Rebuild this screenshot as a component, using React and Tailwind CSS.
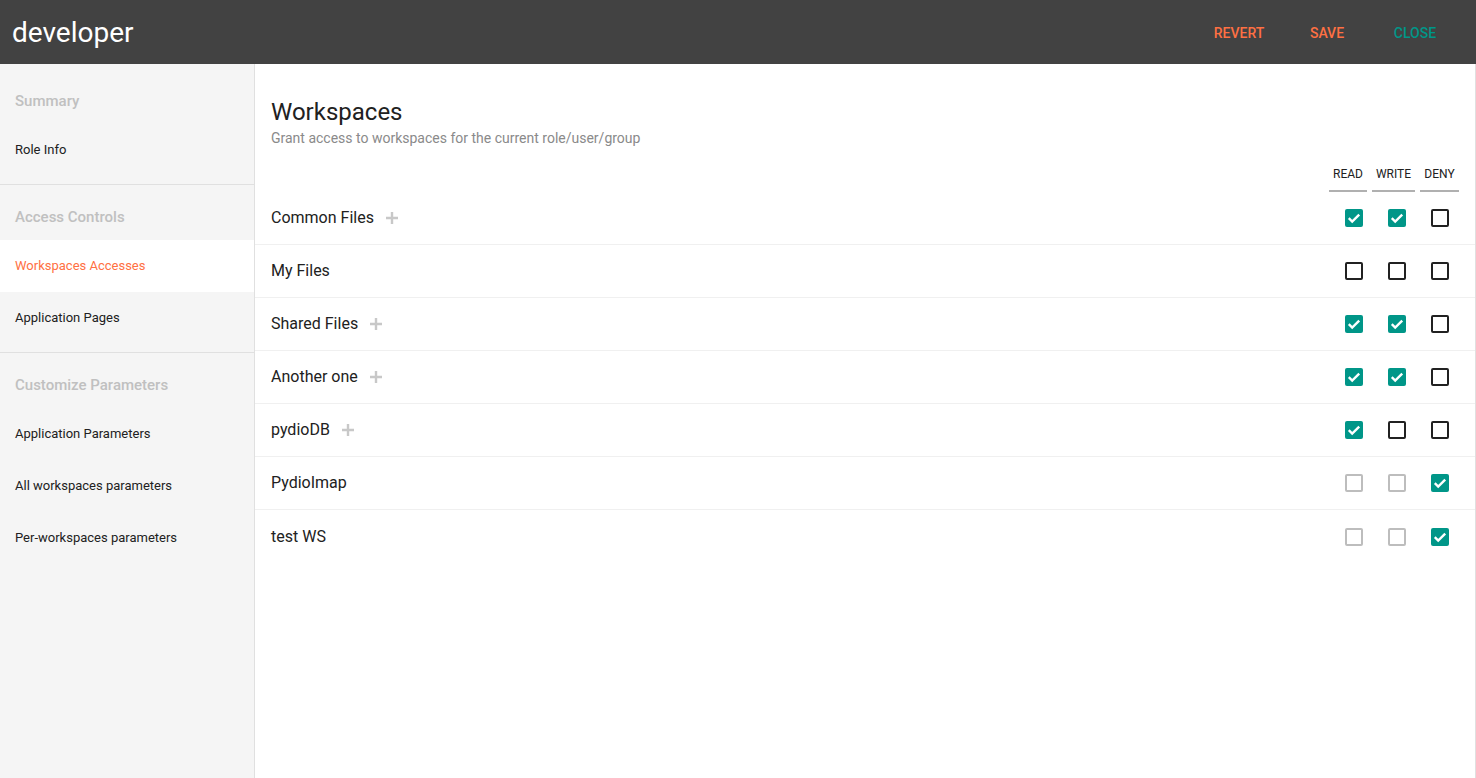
import React from "react";

const workspaces = [
  { name: "Common Files", plus: true, read: true, write: true, deny: false },
  { name: "My Files", plus: false, read: false, write: false, deny: false },
  { name: "Shared Files", plus: true, read: true, write: true, deny: false },
  { name: "Another one", plus: true, read: true, write: true, deny: false },
  { name: "pydioDB", plus: true, read: true, write: false, deny: false },
  { name: "PydioImap", plus: false, read: false, write: false, deny: true, locked: true },
  { name: "test WS", plus: false, read: false, write: false, deny: true, locked: true },
];

function Checkbox({ checked, disabled }) {
  if (checked) {
    return (
      <div className="w-[18px] h-[18px] rounded-[2px] bg-[#009688] flex items-center justify-center">
        <svg width="18" height="18" viewBox="0 0 18 18">
          <path d="M3.8 9.2l3.4 3.4 7-7" fill="none" stroke="#fff" strokeWidth="2.4" />
        </svg>
      </div>
    );
  }
  return (
    <div
      className={
        "w-[18px] h-[18px] rounded-[2px] border-2 " +
        (disabled ? "border-[#bdbdbd]" : "border-[#212121]")
      }
    />
  );
}

function PlusIcon() {
  return (
    <svg width="12" height="12" viewBox="0 0 12 12" className="ml-3">
      <path d="M4.8 0h2.4v4.8H12v2.4H7.2V12H4.8V7.2H0V4.8h4.8z" fill="#c8c8c8" />
    </svg>
  );
}

function SideSection({ title, items, first }) {
  return (
    <div className={"border-b border-[#e0e0e0] " + (first ? "pt-[13px] pb-[8px]" : "pt-[8px] pb-[8px]")}>
      <div className="h-[47px] flex items-center pt-[2px] px-[15px] text-[15px] font-medium text-[#c0c0c0]">{title}</div>
      {items.map((it) => (
        <div
          key={it.label}
          className={
            "h-[52px] flex items-center px-[15px] text-[13px] " +
            (it.active ? "bg-white text-[#ff7043]" : "text-[#212121]")
          }
        >
          {it.label}
        </div>
      ))}
    </div>
  );
}

export default function App() {
  return (
    <div className="h-screen flex flex-col overflow-hidden" style={{ fontFamily: "Roboto, 'Noto Sans', sans-serif" }}>
      {/* top bar */}
      <div className="h-[64px] bg-[#424242] flex items-center justify-between pl-3 pr-[17px] pt-[3px] shrink-0">
        <div className="text-[28px] text-white leading-none pb-[2px]">developer</div>
        <div className="flex">
          <button className="w-[88px] h-9 text-[14px] font-medium text-[#ff7043]">REVERT</button>
          <button className="w-[88px] h-9 text-[14px] font-medium text-[#ff7043]">SAVE</button>
          <button className="w-[88px] h-9 text-[14px] font-medium text-[#009688]">CLOSE</button>
        </div>
      </div>

      <div className="flex flex-1 min-h-0">
        {/* sidebar */}
        <div className="w-[255px] shrink-0 bg-[#f5f5f5] border-r border-[#e0e0e0]">
          <SideSection first title="Summary" items={[{ label: "Role Info" }]} />
          <SideSection
            title="Access Controls"
            items={[{ label: "Workspaces Accesses", active: true }, { label: "Application Pages" }]}
          />
          <div className="pt-[8px]">
            <div className="h-[47px] flex items-center pt-[2px] px-[15px] text-[15px] font-medium text-[#c0c0c0]">Customize Parameters</div>
            {["Application Parameters", "All workspaces parameters", "Per-workspaces parameters"].map((l) => (
              <div key={l} className="h-[52px] flex items-center px-[15px] text-[13px] text-[#212121]">
                {l}
              </div>
            ))}
          </div>
        </div>

        {/* main */}
        <div className="flex-1 bg-white border-r border-[#e0e0e0] pt-[34px]">
          <div className="px-4">
            <h1 className="text-[24px] leading-[28px] text-[#212121]">Workspaces</h1>
            <p className="text-[14px] leading-[20px] text-[#8a8a8a] mt-[2px]">
              Grant access to workspaces for the current role/user/group
            </p>
          </div>

          <div className="flex justify-end pr-4 mt-[18px]">
            <div className="w-[38px] text-center text-[12px] leading-4 text-[#212121] pb-[8px] border-b-2 border-[#b0b0b0]">READ</div>
            <div className="w-[43px] ml-[5px] text-center text-[12px] leading-4 text-[#212121] pb-[8px] border-b-2 border-[#b0b0b0]">WRITE</div>
            <div className="w-[39px] ml-[5px] text-center text-[12px] leading-4 text-[#212121] pb-[8px] border-b-2 border-[#b0b0b0]">DENY</div>
          </div>

          <div>
            {workspaces.map((w, i) => (
              <div
                key={w.name}
                className={
                  "h-[53px] flex items-center pl-4 pr-[26px] " +
                  (i < workspaces.length - 1 ? "border-b border-[#f0f0f0]" : "")
                }
              >
                <div className="flex-1 flex items-center text-[16px] text-[#212121]">
                  {w.name}
                  {w.plus && <PlusIcon />}
                </div>
                <div className="flex gap-[25px]">
                  <Checkbox checked={w.read} disabled={w.locked} />
                  <Checkbox checked={w.write} disabled={w.locked} />
                  <Checkbox checked={w.deny} />
                </div>
              </div>
            ))}
          </div>
        </div>
      </div>
    </div>
  );
}
